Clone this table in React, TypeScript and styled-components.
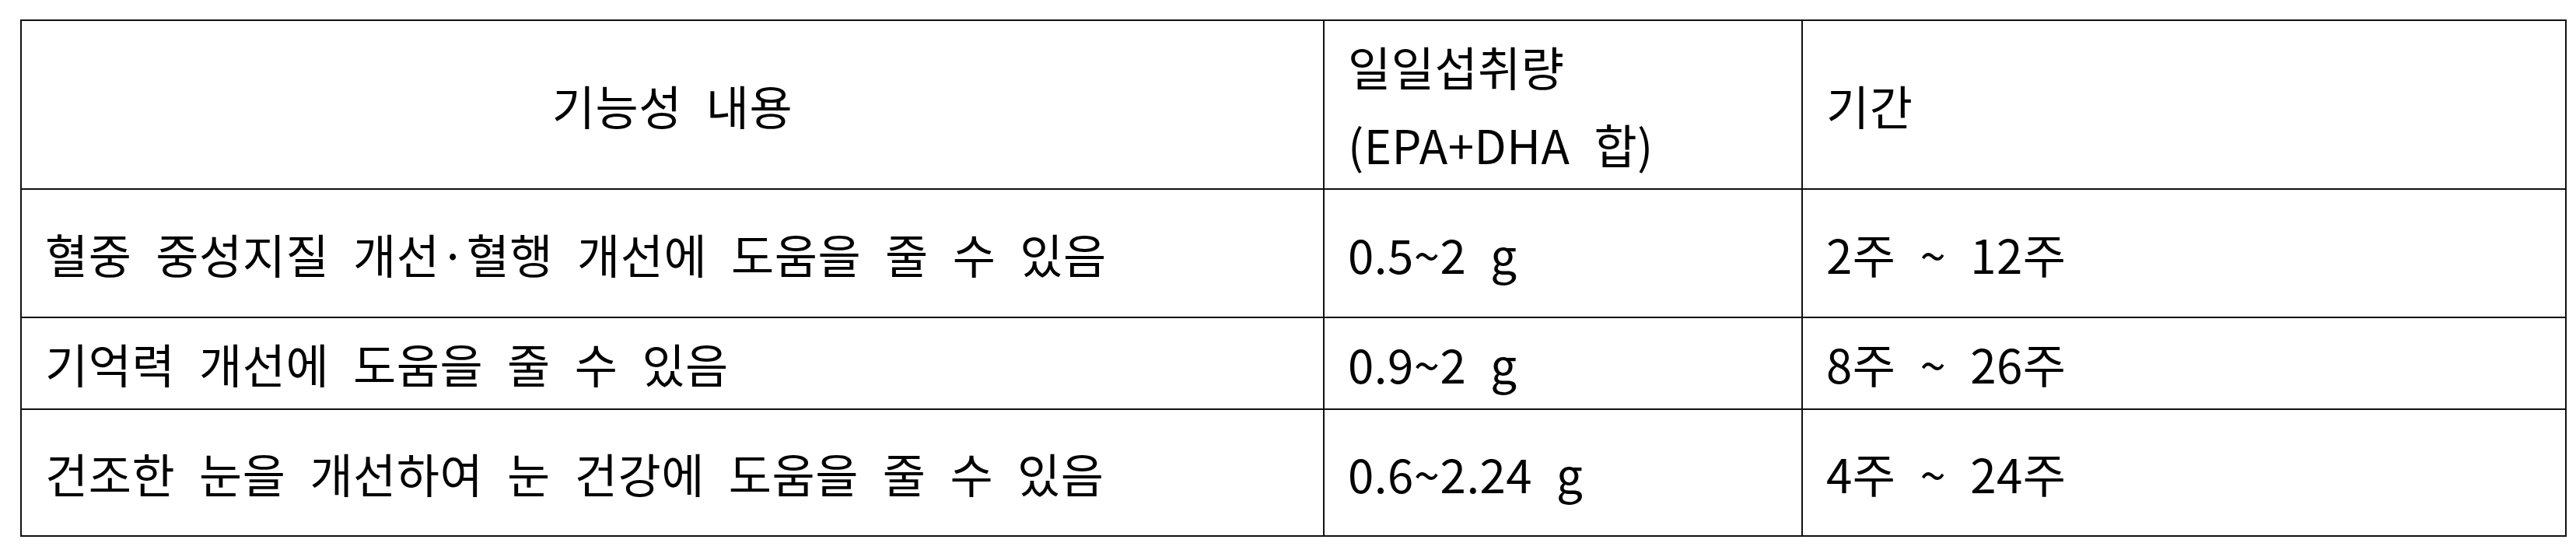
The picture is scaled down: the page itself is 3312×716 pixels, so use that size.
import React from "react";
import styled, { createGlobalStyle } from "styled-components";

const GlobalStyle = createGlobalStyle`
  html, body {
    margin: 0;
    padding: 0;
    background: #ffffff;
  }
  body {
    font-family: "Noto Sans CJK KR", "Noto Sans", sans-serif;
    color: #000;
  }
`;

const Page = styled.div`
  padding: 25px 15px 0 26px;
  width: 3312px;
  box-sizing: border-box;
`;

const Table = styled.table`
  width: 3272px;
  border-collapse: collapse;
  table-layout: fixed;
  border: 2px solid #111;
`;

const Row = styled.tr<{ $height: number }>`
  height: ${({ $height }) => $height}px;
`;

const Cell = styled.td<{ $center?: boolean }>`
  border: 2px solid #111;
  padding: 0 30px;
  font-size: 60px;
  line-height: 100px;
  font-weight: 400;
  letter-spacing: 0.5px;
  word-spacing: 17px;
  text-align: ${({ $center }) => ($center ? "center" : "left")};
  vertical-align: middle;
  white-space: nowrap;
`;

type Item = { effect: string; dose: string; period: string; height: number };

const items: Item[] = [
  { effect: "혈중 중성지질 개선·혈행 개선에 도움을 줄 수 있음", dose: "0.5~2 g", period: "2주 ~ 12주", height: 165 },
  { effect: "기억력 개선에 도움을 줄 수 있음", dose: "0.9~2 g", period: "8주 ~ 26주", height: 118 },
  { effect: "건조한 눈을 개선하여 눈 건강에 도움을 줄 수 있음", dose: "0.6~2.24 g", period: "4주 ~ 24주", height: 163 },
];

export default function App() {
  return (
    <Page>
      <GlobalStyle />
      <Table>
        <colgroup>
          <col style={{ width: 1675 }} />
          <col style={{ width: 615 }} />
          <col style={{ width: 982 }} />
        </colgroup>
        <tbody>
          <Row $height={217}>
            <Cell $center>기능성 내용</Cell>
            <Cell>
              일일섭취량
              <br />
              (EPA+DHA 합)
            </Cell>
            <Cell>기간</Cell>
          </Row>
          {items.map((it) => (
            <Row key={it.effect} $height={it.height}>
              <Cell>{it.effect}</Cell>
              <Cell>{it.dose}</Cell>
              <Cell>{it.period}</Cell>
            </Row>
          ))}
        </tbody>
      </Table>
    </Page>
  );
}
